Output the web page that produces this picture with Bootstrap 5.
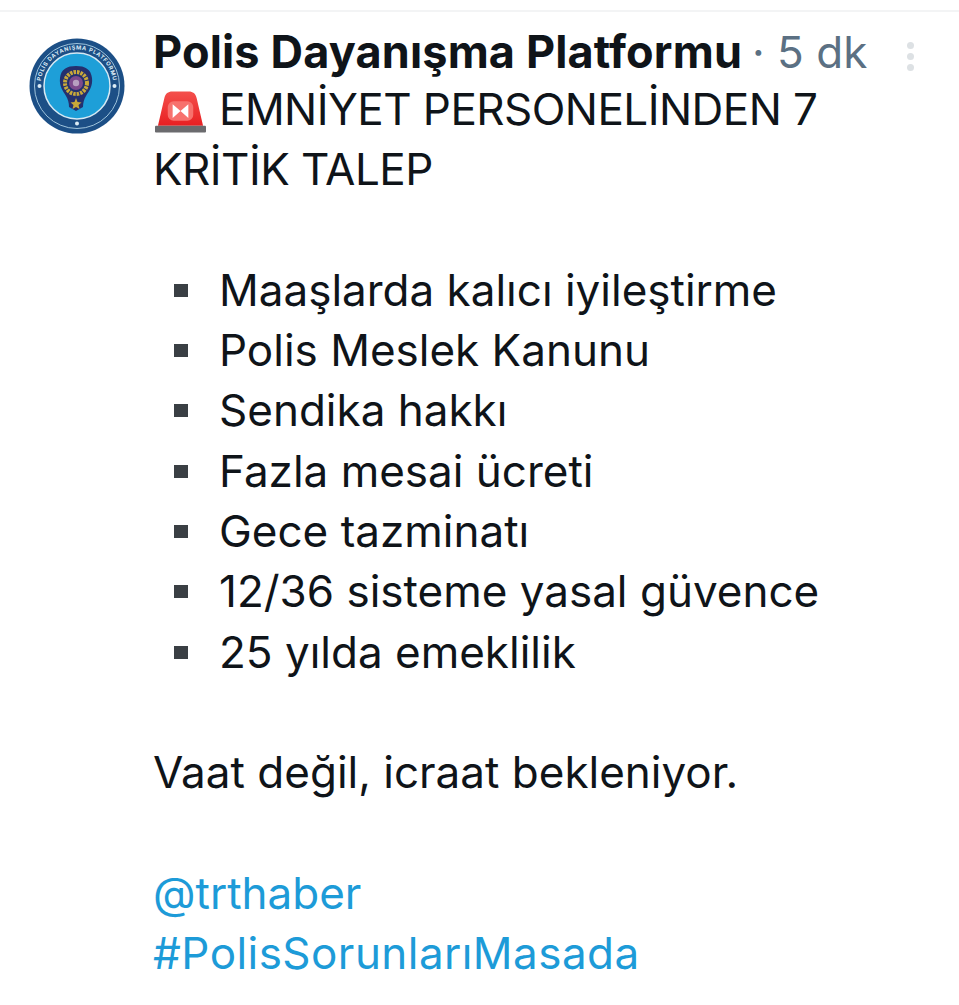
<!DOCTYPE html>
<html lang="tr">
<head>
  <meta charset="UTF-8" />
  <meta name="viewport" content="width=device-width, initial-scale=1" />
  <title>Polis Dayanışma Platformu</title>
  <link href="https://cdn.jsdelivr.net/npm/bootstrap@5.3.0/dist/css/bootstrap.min.css" rel="stylesheet" />
  <style>
    body { font-family: Inter, "Liberation Sans", sans-serif; color: #0f1419; background: #fff; overflow: hidden; }
    .tweet { border-top: 2px solid #f3f4f5; margin-top: 10px; padding: 16px 0 0 29px; gap: 28px; }
    .avatar { width: 96px; height: 96px; flex: none; margin-top: 10px; }
    .tweet-body { font-size: 44px; line-height: 60.3px; min-width: 0; }
    .tweet-head { height: 44px; line-height: 48px; white-space: nowrap; }
    .tweet-name { font-weight: 700; font-size: 45px; letter-spacing: .15px; }
    .tweet-time { color: #5b7083; margin-left: 10px; }
    .tweet-more { position: absolute; top: 42px; left: 907px; width: 7px; }
    .tweet-more i { display: block; width: 7px; height: 7px; border-radius: 50%; background: #dde1e4; margin-bottom: 4px; }
    .siren { width: 51px; height: 42px; vertical-align: -8px; margin-left: 2px; margin-right: 13px; }
    .caps-line { letter-spacing: -.55px; }
    .tweet-text { padding-top: 7px; }
    .gap-line { height: 60.3px; }
    .item-dot { width: 14px; height: 13px; background: #3a3f44; flex: none; margin: 24px 31px 0 21px; }
    .tweet-link { color: #1d9bd8; text-decoration: none; display: block; }
    .tag-link { letter-spacing: .45px; }
  </style>
</head>
<body>
  <div class="tweet d-flex">
    <svg class="avatar" viewBox="0 0 96 96">
      <circle cx="48" cy="48" r="47.5" fill="#1c4f86" />
      <circle cx="48" cy="48" r="42.5" fill="none" stroke="#9fc4dc" stroke-width="1" />
      <circle cx="48" cy="48" r="33" fill="#1e9fd8" stroke="#d6e9f4" stroke-width="1.5" />
      <path id="ringText" d="M11.5 48a36.5 36.5 0 0 1 73 0" fill="none" />
      <circle cx="10.5" cy="48" r="2" fill="#dcecf5" />
      <circle cx="85.5" cy="48" r="2" fill="#dcecf5" />
      <circle cx="48" cy="85.5" r="2" fill="#dcecf5" />
      <text font-size="5.6" font-weight="700" fill="#dcecf5" font-family="Inter, sans-serif"><textPath href="#ringText" startOffset="5" textLength="104">POLİS DAYANIŞMA PLATFORMU</textPath></text>
      <path d="M47 28c9 0 15 3 16 12 1 8-3 13-6 18-2 3-3 7-3 11l-7 4-7-4c0-4-1-8-3-11-3-5-7-10-6-18 1-9 7-12 16-12z" fill="#24306e" />
      <circle cx="47" cy="45" r="11" fill="none" stroke="#c9a93a" stroke-width="4" stroke-dasharray="2.5 1" />
      <circle cx="47" cy="45" r="7" fill="#7d4a8c" />
      <circle cx="47" cy="45" r="3.2" fill="#b8a0c0" />
      <path d="M47 60l1.5 4 4 .5-3 2.500 1 4-3.500-2-3.500 2 1-4-3-2.500 4-.5z" fill="#c9a93a" />
    </svg>
    <div class="tweet-body flex-grow-1">
      <div class="tweet-head"><span class="tweet-name">Polis Dayanışma Platformu</span><span class="tweet-time">· 5 dk</span></div>
      <div class="tweet-more"><i></i><i></i><i></i></div>
      <div class="tweet-text">
        <div class="caps-line"><svg class="siren" viewBox="0 0 52 42">
          <defs><linearGradient id="sirenRed" x1="0" y1="0" x2="0" y2="1"><stop offset="0" stop-color="#f4504c" /><stop offset="1" stop-color="#e81f22" /></linearGradient></defs>
          <path d="M3 35 9.500 7c1-5 4-7 8-7h17c4 0 7 2 8 7L49 35z" fill="url(#sirenRed)" />
          <rect x="0" y="35" width="52" height="7" rx="1" fill="#6b6b6e" />
          <rect x="13" y="10" width="26" height="20" rx="6" fill="#f7716d" />
          <path d="M18 13l8 7 8-7v14l-8-7-8 7z" fill="#fff" />
        </svg>EMNİYET PERSONELİNDEN 7</div>
        <div class="caps-line">KRİTİK TALEP</div>
        <div class="gap-line"></div>
        <ul class="list-unstyled mb-0">
          <li class="d-flex"><span class="item-dot"></span>Maaşlarda kalıcı iyileştirme</li>
          <li class="d-flex"><span class="item-dot"></span>Polis Meslek Kanunu</li>
          <li class="d-flex"><span class="item-dot"></span>Sendika hakkı</li>
          <li class="d-flex"><span class="item-dot"></span>Fazla mesai ücreti</li>
          <li class="d-flex"><span class="item-dot"></span>Gece tazminatı</li>
          <li class="d-flex"><span class="item-dot"></span>12/36 sisteme yasal güvence</li>
          <li class="d-flex"><span class="item-dot"></span>25 yılda emeklilik</li>
        </ul>
        <div class="gap-line"></div>
        <div>Vaat değil, icraat bekleniyor.</div>
        <div class="gap-line"></div>
        <a class="tweet-link" href="#">@trthaber</a>
        <a class="tweet-link tag-link" href="#">#PolisSorunlarıMasada</a>
      </div>
    </div>
  </div>
</body>
</html>
